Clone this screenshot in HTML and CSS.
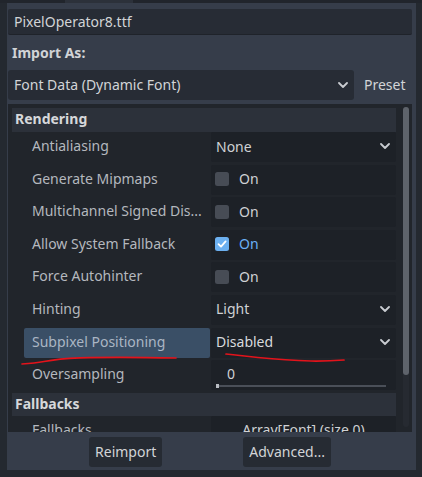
FILE: index.html
```html
<!DOCTYPE html>
<html>
<head>
<meta charset="utf-8">
<link rel="stylesheet" href="styles.css">
</head>
<body>
<div class="tabbar"><div class="tab"></div></div>
<div class="dock">
  <div class="field">PixelOperator8.ttf</div>
  <div class="import-label">Import As:</div>
  <div class="import-row">
    <div class="select">
      <span>Font Data (Dynamic Font)</span>
      <svg class="chev" width="10" height="6" viewBox="0 0 10 6"><polyline points="1,1 5,5 9,1" /></svg>
    </div>
    <span class="preset">Preset</span>
  </div>
  <div class="inspector">
    <div class="content">
      <div class="section">Rendering</div>
      <div class="row">
        <div class="label">Antialiasing</div>
        <div class="value dropdown"><span>None</span><svg class="chev" width="10" height="6" viewBox="0 0 10 6"><polyline points="1,1 5,5 9,1" /></svg></div>
      </div>
      <div class="row">
        <div class="label">Generate Mipmaps</div>
        <div class="value"><span class="check"></span><span class="on">On</span></div>
      </div>
      <div class="row">
        <div class="label">Multichannel Signed Dis...</div>
        <div class="value"><span class="check"></span><span class="on">On</span></div>
      </div>
      <div class="row">
        <div class="label">Allow System Fallback</div>
        <div class="value"><span class="check checked"><svg width="14" height="14" viewBox="0 0 14 14"><polyline points="3.5,7.2 6,9.6 10.6,4.4" /></svg></span><span class="on active">On</span></div>
      </div>
      <div class="row">
        <div class="label">Force Autohinter</div>
        <div class="value"><span class="check"></span><span class="on">On</span></div>
      </div>
      <div class="row">
        <div class="label">Hinting</div>
        <div class="value dropdown"><span>Light</span><svg class="chev" width="10" height="6" viewBox="0 0 10 6"><polyline points="1,1 5,5 9,1" /></svg></div>
      </div>
      <div class="row">
        <div class="label selected">Subpixel Positioning</div>
        <div class="value dropdown"><span class="bright">Disabled</span><svg class="chev" width="10" height="6" viewBox="0 0 10 6"><polyline points="1,1 5,5 9,1" /></svg></div>
      </div>
      <div class="row">
        <div class="label">Oversampling</div>
        <div class="value slider"><span class="num">0</span><div class="track"><div class="grabber"></div></div></div>
      </div>
      <div class="section short">Fallbacks</div>
      <div class="row">
        <div class="label">Fallbacks</div>
        <div class="value center">Array[Font] (size 0)</div>
      </div>
    </div>
    <div class="scrollbar"><div class="thumb"></div></div>
  </div>
  <div class="buttons">
    <button class="btn">Reimport</button>
    <button class="btn">Advanced...</button>
  </div>
</div>
<svg class="marks" width="422" height="477" viewBox="0 0 422 477">
  <path d="M22,364 C30,363.5 36,363 44,361.5 C54,359.5 62,358.5 80,357.8 C110,357 140,357.2 176,358" />
  <path d="M226,354 C236,355 244,356 258,357.5 C275,359.2 292,360.5 311,361 C326,361.2 336,360.6 344,360" />
</svg>
</body>
</html>
```

FILE: styles.css
```css
* {
  box-sizing: border-box;
}

html, body {
  margin: 0;
  padding: 0;
}

body {
  width: 422px;
  height: 477px;
  overflow: hidden;
  background: #242930;
  font-family: "Noto Sans", "Open Sans", sans-serif;
  font-size: 14px;
  color: #c8cbcf;
  position: relative;
}

.tabbar {
  height: 3px;
  background: #21252c;
  position: relative;
}

.tab {
  margin-left: 65px;
  width: 68px;
  height: 3px;
  background: #2c313a;
}

.dock {
  margin-left: 7px;
  width: 409px;
  height: 467px;
  background: #363d4a;
  padding: 6px 4px 0 1px;
  display: flex;
  flex-direction: column;
}

.field {
  height: 26px;
  background: #272c35;
  border-bottom: 1px solid #1f232a;
  border-radius: 2px;
  padding-left: 6px;
  line-height: 25px;
  color: #d2d4d7;
}

.import-label {
  height: 35px;
  line-height: 35px;
  padding-left: 4px;
  font-weight: bold;
  color: #d0d3d6;
}

.import-row {
  display: flex;
  align-items: center;
  height: 30px;
}

.select {
  width: 346px;
  height: 30px;
  background: #272c35;
  border-radius: 3px;
  display: flex;
  align-items: center;
  justify-content: space-between;
  padding: 0 6px 1px 6px;
  color: #d2d4d7;
}

.chev polyline {
  fill: none;
  stroke: #c9ccd1;
  stroke-width: 1.8;
  stroke-linecap: round;
  stroke-linejoin: round;
}

.preset {
  margin-left: 10px;
  margin-bottom: 1px;
  color: #d2d4d7;
}

.inspector {
  margin-top: 4px;
  height: 328px;
  background: #21252b;
  padding: 4px 3px 0 4px;
  display: flex;
}

.content {
  width: 384px;
  height: 324px;
  overflow: hidden;
}

.section {
  height: 24px;
  background: #2c313a;
  line-height: 22px;
  padding-left: 3px;
  font-weight: bold;
  color: #d6d8db;
}

.section.short {
  height: 23px;
}

.row {
  height: 32.6px;
  display: flex;
}

.label {
  margin-left: 12px;
  width: 186px;
  height: 30px;
  line-height: 28px;
  padding-left: 8px;
  color: #b4b8be;
  white-space: nowrap;
  overflow: hidden;
}

.label.selected {
  background: #3a4f66;
  color: #aab6c4;
  border-radius: 2px;
}

.value {
  margin-left: 1px;
  width: 185px;
  height: 30px;
  background: #1d2127;
  border-radius: 2px;
  display: flex;
  align-items: center;
  padding: 0 0 1px 4px;
  color: #cfd1d4;
}

.value.dropdown {
  justify-content: space-between;
  padding: 0 6px 2px 5px;
}

.bright {
  color: #d8dadd;
}

.check {
  width: 14px;
  height: 14px;
  border-radius: 2.5px;
  background: #474c55;
  display: inline-block;
}

.check.checked {
  background: #6cb0f0;
}

.check svg {
  display: block;
}

.check polyline {
  fill: none;
  stroke: #ffffff;
  stroke-width: 1.8;
  stroke-linecap: round;
  stroke-linejoin: round;
}

.on {
  margin-left: 10px;
  margin-bottom: 1px;
}

.on.active {
  color: #6ab0f5;
}

.value.slider {
  position: relative;
  display: block;
  padding: 0;
}

.num {
  display: block;
  padding-left: 16px;
  line-height: 28px;
}

.track {
  position: absolute;
  left: 5px;
  right: 10px;
  top: 25px;
  height: 2px;
  background: #4a4f58;
}

.grabber {
  width: 3px;
  height: 4px;
  margin-top: -1px;
  background: #b8bcc2;
}

.value.center {
  justify-content: center;
  padding: 0 0 2px 0;
}

.scrollbar {
  margin-left: 7px;
  width: 6px;
  height: 320px;
  background: #262a31;
  border-radius: 3px;
  margin-top: -1px;
}

.thumb {
  height: 268px;
  background: #5e636b;
  border-radius: 3px;
}

.buttons {
  flex: 1;
  display: flex;
  align-items: flex-start;
  justify-content: space-evenly;
  padding-top: 5px;
}

.btn {
  height: 30px;
  padding: 0 6px 1px;
  background: #262b33;
  border: none;
  border-radius: 3px;
  font-family: "Noto Sans", "Open Sans", sans-serif;
  font-size: 14px;
  color: #d2d4d7;
}

.marks {
  position: absolute;
  left: 0;
  top: 0;
  pointer-events: none;
}

.marks path {
  fill: none;
  stroke: #e3131b;
  stroke-width: 1.7;
  stroke-linecap: round;
}
```
